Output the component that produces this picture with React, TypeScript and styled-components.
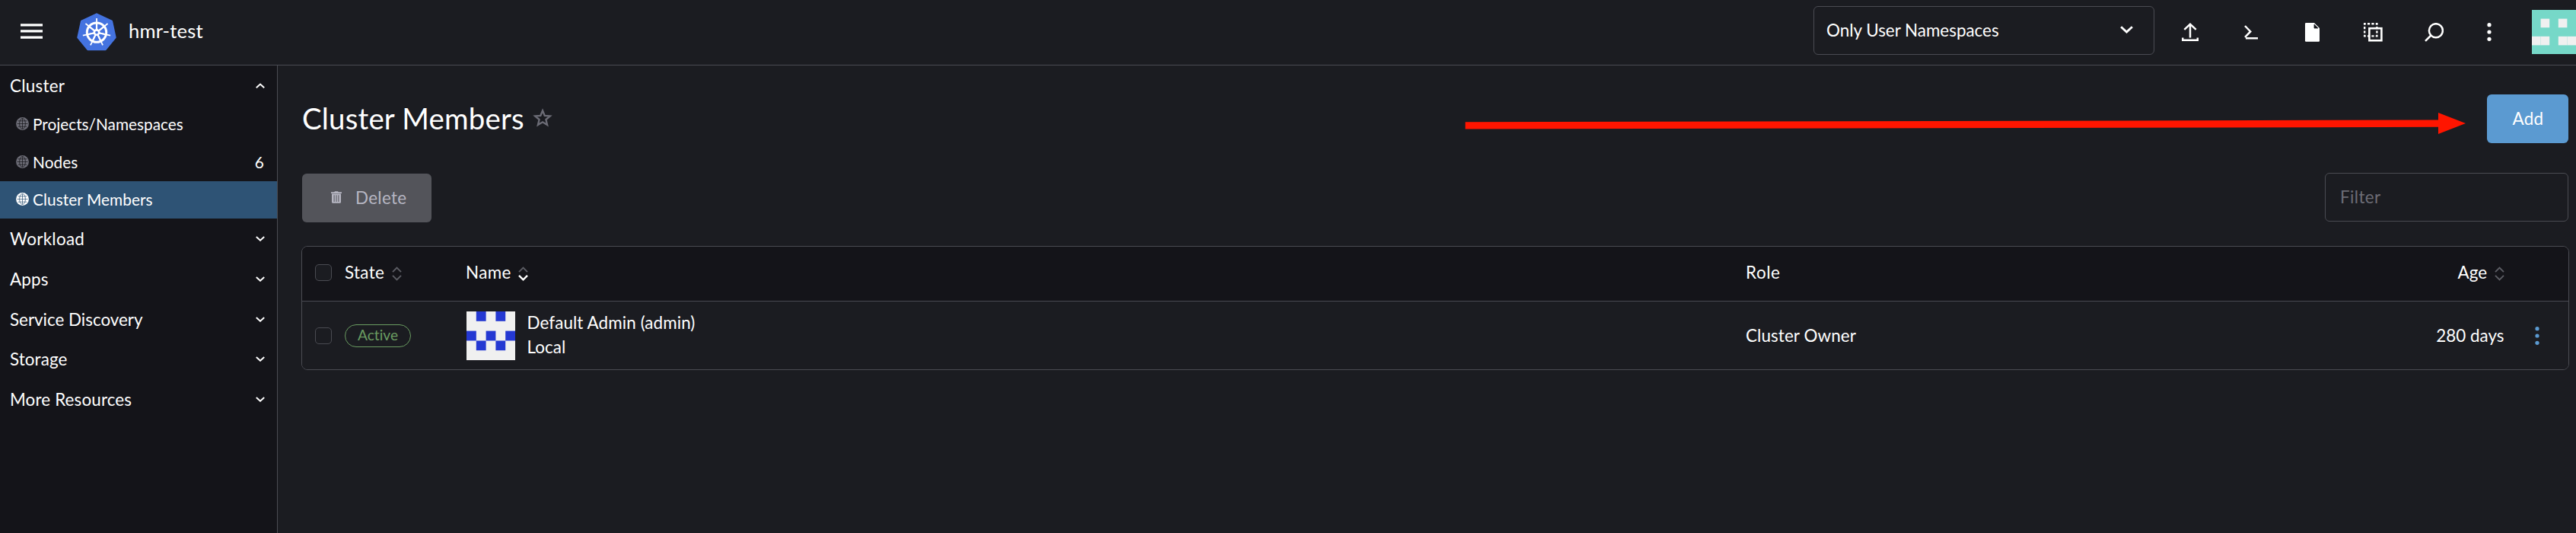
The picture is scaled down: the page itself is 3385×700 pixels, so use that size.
import React from 'react';
import styled, { createGlobalStyle, css } from 'styled-components';

const color = {
  body: '#1b1c21',
  nav: '#141419',
  border: '#4a4b52',
  text: '#ffffff',
  muted: '#6c6c76',
  active: '#2e5375',
  primary: '#5b9ad1',
  disabled: '#53545a',
  disabledText: '#b6b6c2',
  success: '#6a9c61',
};

const GlobalStyle = createGlobalStyle`
  *, *::before, *::after { box-sizing: border-box; }
  body {
    margin: 0;
    background: ${color.body};
    color: ${color.text};
    font-family: Lato, 'Liberation Sans', sans-serif;
    font-size: 22.4px;
    font-variant-ligatures: none;
  }
  svg { display: block; flex: none; }
  button, input { font: inherit; }
`;

const Page = styled.div`
  position: relative;
  display: flex;
  flex-direction: column;
  height: 700px;
  overflow: hidden;
`;

const Header = styled.header`
  display: flex;
  align-items: center;
  height: 86px;
  flex: none;
  padding: 0 0 5px 27px;
  border-bottom: 1px solid ${color.border};
`;

const MenuButton = styled.div`
  margin: 2px 44px 0 0;
`;

const ClusterLogo = styled.div`
  margin: 3px 16px 0 0;
`;

const ClusterName = styled.div`
  flex: 1;
  font-size: 25.6px;
  letter-spacing: 0.15px;
`;

const NamespaceSelect = styled.div`
  display: flex;
  align-items: center;
  justify-content: space-between;
  width: 448px;
  height: 64px;
  margin-right: 7px;
  padding: 0 27px 2px 16px;
  border: 1px solid ${color.border};
  border-radius: 6px;
`;

const HeaderAction = styled.div<{ $width?: number }>`
  display: flex;
  align-items: center;
  justify-content: center;
  width: ${(p) => p.$width ?? 80}px;
  padding-top: 4px;
`;

const UserAvatar = styled.div`
  margin: 4px 0 0 23px;
`;

const Body = styled.div`
  display: flex;
  flex: 1;
  min-height: 0;
`;

const SideNav = styled.nav`
  width: 365px;
  flex: none;
  background: ${color.nav};
  border-right: 1px solid ${color.border};
`;

const GroupHeader = styled.div<{ $spacing?: number }>`
  display: flex;
  align-items: center;
  justify-content: space-between;
  height: 52.75px;
  padding: 0 16px 0 13px;
  letter-spacing: ${(p) => p.$spacing ?? 0}px;
`;

const NavItem = styled.div<{ $active?: boolean; $spacing?: number }>`
  display: flex;
  align-items: center;
  height: 49.5px;
  padding: 0 17px 2px 21px;
  font-size: 20.8px;
  letter-spacing: ${(p) => p.$spacing ?? 0}px;
  background: ${(p) => (p.$active ? color.active : 'transparent')};
`;

const NavLabel = styled.span`
  flex: 1;
  padding-left: 5px;
`;

const Main = styled.main`
  flex: 1;
  min-width: 0;
  padding: 38px 10px 0 32px;
`;

const TitleRow = styled.div`
  display: flex;
  align-items: center;
  height: 64px;
`;

const Title = styled.h1`
  margin: 0 11px 2px 0;
  font-size: 38.4px;
  font-weight: 400;
  line-height: 46px;
  letter-spacing: 0.2px;
`;

const StarIcon = styled.div`
  flex: 1;
  margin-top: -3px;
`;

const button = css`
  display: flex;
  align-items: center;
  height: 64px;
  border: 0;
  border-radius: 6px;
  letter-spacing: 0.3px;
`;

const AddButton = styled.button`
  ${button}
  justify-content: center;
  width: 107px;
  padding: 0 0 1px 1px;
  color: #ffffff;
  background: ${color.primary};
`;

const DeleteButton = styled.button`
  ${button}
  gap: 18px;
  width: 170px;
  padding: 0 0 2px 38px;
  color: ${color.disabledText};
  background: ${color.disabled};
`;

const Toolbar = styled.div`
  display: flex;
  align-items: flex-start;
  justify-content: space-between;
  height: 65px;
  margin: 39px 0 31px;
  padding-top: 1px;
`;

const FilterInput = styled.input`
  width: 320px;
  height: 64px;
  margin-top: -1px;
  padding: 0 19px 1px;
  color: ${color.text};
  letter-spacing: 0.4px;
  background: transparent;
  border: 1px solid ${color.border};
  border-radius: 6px;
  &::placeholder { color: ${color.muted}; opacity: 1; }
`;

const Table = styled.div`
  margin: 0 -1px;
  border: 1px solid ${color.border};
  border-radius: 8px;
  overflow: hidden;
`;

const TableRow = styled.div<{ $head?: boolean }>`
  display: grid;
  grid-template-columns: 56px 159px 1682px 1fr 160px 84.5px;
  align-items: center;
  height: ${(p) => (p.$head ? 72 : 89)}px;
  padding-bottom: ${(p) => (p.$head ? 5 : 0)}px;
  background: ${(p) => (p.$head ? color.nav : color.body)};
  border-bottom: ${(p) => (p.$head ? `1px solid ${color.border}` : '0')};
`;

const Cell = styled.div<{ $end?: boolean; $spacing?: number }>`
  display: flex;
  align-items: center;
  justify-content: ${(p) => (p.$end ? 'flex-end' : 'flex-start')};
  white-space: nowrap;
  letter-spacing: ${(p) => p.$spacing ?? 0}px;
`;

const SortArrows = styled.div`
  margin: 5px 0 0 9.5px;
`;

const Checkbox = styled.div`
  width: 22px;
  height: 22px;
  margin: 1px 0 0 17px;
  background: ${color.body};
  border: 1px solid ${color.border};
  border-radius: 5px;
`;

const StateBadge = styled.div`
  height: 30px;
  width: 87px;
  padding-bottom: 3px;
  display: flex;
  align-items: center;
  justify-content: center;
  font-size: 19.2px;
  color: ${color.success};
  border: 1px solid ${color.success};
  border-radius: 15px;
`;

const Member = styled.div`
  display: flex;
  align-items: center;
  gap: 15.5px;
  padding-left: 1px;
`;

const MemberName = styled.div`
  line-height: 32px;
  letter-spacing: 0.1px;
  padding-bottom: 1px;
`;

const RowActions = styled.div`
  padding-left: 40px;
`;

const PointerArrow = styled.svg`
  position: absolute;
  left: 1925px;
  top: 146px;
  pointer-events: none;
`;

const Hamburger = () => (
  <svg width="30" height="20" viewBox="0 0 30 20" fill="#fff">
    <path d="M0 .2h29v3.3H0zM0 8.3h29v3.3H0zM0 16.4h29v3.3H0z" />
  </svg>
);

const SPOKES = [0, 1, 2, 3, 4, 5, 6].map((i) => (i * 360) / 7);

const KubernetesLogo = () => (
  <svg width="52" height="50" viewBox="0 0 52 50">
    <path
      d="M26 1.6 45.8 11l4.6 21.2L37.5 48h-23L1.6 32.2 6.2 11z"
      fill="#4473e0"
      stroke="#4473e0"
      strokeWidth="2.6"
      strokeLinejoin="round"
    />
    <g stroke="#fff" fill="none">
      <circle cx="26" cy="25.6" r="12.7" strokeWidth="3" />
      {SPOKES.map((angle) => (
        <g key={angle} transform={`rotate(${angle} 26 25.6)`}>
          <path d="M26 22V7" strokeWidth="1.8" />
          <path d="M26 22.5v-9" strokeWidth="2.2" />
        </g>
      ))}
      <circle cx="26" cy="25.6" r="3.2" strokeWidth="2.6" />
    </g>
  </svg>
);

const Chevron = ({ up, size = 12 }: { up?: boolean; size?: number }) => (
  <svg width={size} height={size * 0.6} viewBox="0 0 12 7.2" fill="none" stroke="#fff" strokeWidth="2">
    <path d={up ? 'M.8 6.3 6 1.5l5.2 4.8' : 'M.8.9 6 5.7 11.2.9'} />
  </svg>
);

const UploadIcon = () => (
  <svg width="22" height="25" viewBox="0 0 22 25" fill="none" stroke="#fff" strokeWidth="2.5">
    <path d="M11 19.5V2M3.3 8.8 11 1.7l7.7 7.1M1.2 19.5v3.3h19.6v-3.3" />
  </svg>
);

const ShellIcon = () => (
  <svg width="18" height="19" viewBox="0 0 18 19" fill="none" stroke="#fff" strokeWidth="2.5">
    <path d="M1 1l7.2 7.4L1 15.8M2 17.3h16" />
  </svg>
);

const FileIcon = () => (
  <svg width="19" height="25" viewBox="0 0 19 25">
    <path d="M1.2 0H12l7 7v16.5q0 1.2-1.2 1.2H1.2Q0 24.7 0 23.5V1.2Q0 0 1.2 0z" fill="#fff" />
    <path d="M12 2v5h5z" fill={color.body} stroke={color.body} strokeWidth="0.8" />
  </svg>
);

const CopyIcon = () => (
  <svg width="25" height="25" viewBox="0 0 25 25" fill="none" stroke="#fff">
    <rect x="1.2" y="1.2" width="16.2" height="16.2" strokeWidth="2.4" strokeDasharray="3.2 2.2" strokeDashoffset="1.6" />
    <rect x="7.4" y="7.2" width="16" height="16" strokeWidth="2.6" />
  </svg>
);

const SearchIcon = () => (
  <svg width="25" height="25" viewBox="0 0 25 25" fill="none" stroke="#fff" strokeWidth="2.5">
    <circle cx="14.9" cy="10.2" r="9" />
    <path d="M8.4 16.5 1 23.8" />
  </svg>
);

const Kebab = ({ fill = '#fff' }: { fill?: string }) => (
  <svg width="6" height="24" viewBox="0 0 6 24" fill={fill}>
    <circle cx="3" cy="2.7" r="2.6" />
    <circle cx="3" cy="12" r="2.6" />
    <circle cx="3" cy="21.3" r="2.6" />
  </svg>
);

const GlobeIcon = ({ active }: { active?: boolean }) => (
  <svg width="17" height="17" viewBox="0 0 17 17">
    <circle cx="8.5" cy="8.5" r="8.4" fill={active ? '#fff' : color.muted} />
    <g fill="none" stroke={active ? color.active : color.nav} strokeWidth="0.7">
      <path d="M8.5 1.5v14M1.5 8.5h14M2.8 4.8h11.4M2.8 12.2h11.4" />
      <ellipse cx="8.5" cy="8.5" rx="3.9" ry="7" />
    </g>
  </svg>
);

const FavoriteStar = () => (
  <svg width="26" height="25" viewBox="0 0 26 25" fill="none" stroke={color.muted} strokeWidth="2.3">
    <path d="M13 3.2 15.7 9.8 22.9 10.4 17.4 15 19.1 22 13 18.3 6.9 22 8.6 15 3.1 10.4 10.3 9.8z" />
  </svg>
);

const TrashIcon = () => (
  <svg width="14" height="16" viewBox="0 0 14 16" fill={color.disabledText}>
    <path d="M0 1.3h4.2L5 .2h4l.8 1.1H14V3H0z" />
    <path fillRule="evenodd" d="M1 3.6h12V14.5q0 1.3-1.3 1.3H2.3Q1 15.8 1 14.5zM3.6 5.2v8.7h1V5.2zM6.5 5.2v8.7h1V5.2zM9.4 5.2v8.7h1V5.2z" />
  </svg>
);

const Sort = ({ descending }: { descending?: boolean }) => (
  <SortArrows>
    <svg width="13" height="19" viewBox="0 0 13 19" fill="none" strokeWidth="1.9">
      <path d="M1 7.2 6.5 1.5 12 7.2" stroke="#5c5d64" />
      <path d="M1 11.8 6.5 17.3 12 11.8" stroke={descending ? '#fff' : '#5c5d64'} strokeWidth={descending ? 2.4 : 1.9} />
    </svg>
  </SortArrows>
);

interface IdenticonProps {
  size: number;
  background: string;
  fill: string;
  rows: string[];
}

const Identicon = ({ size, background, fill, rows }: IdenticonProps) => (
  <svg width={size} height={size} viewBox="0 0 5 5">
    <rect width="5" height="5" fill={background} />
    {rows.flatMap((row, y) =>
      [...row].map((cell, x) =>
        cell === '#' ? <rect key={`${x}-${y}`} x={x} y={y} width="1" height="1" fill={fill} /> : null,
      ),
    )}
  </svg>
);

const clusterItems = [
  { label: 'Projects/Namespaces', spacing: 0 },
  { label: 'Nodes', count: 6, spacing: 0.1 },
  { label: 'Cluster Members', active: true, spacing: 0.08 },
];

const groups = [
  { label: 'Workload', spacing: 0.3 },
  { label: 'Apps', spacing: 0.2 },
  { label: 'Service Discovery', spacing: 0 },
  { label: 'Storage', spacing: 0.1 },
  { label: 'More Resources', spacing: 0.15 },
];

export default function App() {
  return (
    <Page>
      <GlobalStyle />
      <Header>
        <MenuButton><Hamburger /></MenuButton>
        <ClusterLogo><KubernetesLogo /></ClusterLogo>
        <ClusterName>hmr-test</ClusterName>
        <NamespaceSelect>
          Only User Namespaces
          <Chevron size={17} />
        </NamespaceSelect>
        <HeaderAction><UploadIcon /></HeaderAction>
        <HeaderAction><ShellIcon /></HeaderAction>
        <HeaderAction><FileIcon /></HeaderAction>
        <HeaderAction><CopyIcon /></HeaderAction>
        <HeaderAction><SearchIcon /></HeaderAction>
        <HeaderAction $width={66}><Kebab /></HeaderAction>
        <UserAvatar>
          <Identicon size={58} background="#76d8c8" fill="#f0f0f0" rows={['', '.#.#.', '', '##.##', '']} />
        </UserAvatar>
      </Header>
      <Body>
        <SideNav>
          <GroupHeader $spacing={0.25}>Cluster<Chevron up /></GroupHeader>
          {clusterItems.map((item) => (
            <NavItem key={item.label} $active={item.active} $spacing={item.spacing}>
              <GlobeIcon active={item.active} />
              <NavLabel>{item.label}</NavLabel>
              {item.count}
            </NavItem>
          ))}
          {groups.map((group) => (
            <GroupHeader key={group.label} $spacing={group.spacing}>
              {group.label}
              <Chevron />
            </GroupHeader>
          ))}
        </SideNav>
        <Main>
          <TitleRow>
            <Title>Cluster Members</Title>
            <StarIcon><FavoriteStar /></StarIcon>
            <AddButton>Add</AddButton>
          </TitleRow>
          <Toolbar>
            <DeleteButton><TrashIcon />Delete</DeleteButton>
            <FilterInput placeholder="Filter" />
          </Toolbar>
          <Table>
            <TableRow $head>
              <Checkbox />
              <Cell $spacing={0.35}>State<Sort /></Cell>
              <Cell $spacing={0.4}>Name<Sort descending /></Cell>
              <Cell $spacing={0.6}>Role</Cell>
              <Cell $end>Age<Sort /></Cell>
            </TableRow>
            <TableRow>
              <Checkbox />
              <Cell><StateBadge>Active</StateBadge></Cell>
              <Member>
                <Identicon size={64} background="#f0f0f0" fill="#2438d2" rows={['.#.#.', '', '#.#.#', '.#.#.', '']} />
                <MemberName>
                  <div>Default Admin (admin)</div>
                  <div>Local</div>
                </MemberName>
              </Member>
              <Cell $spacing={0.1}>Cluster Owner</Cell>
              <Cell $end>280 days</Cell>
              <RowActions><Kebab fill={color.primary} /></RowActions>
            </TableRow>
          </Table>
        </Main>
      </Body>
      <PointerArrow width="1316" height="32" viewBox="0 0 1316 32" fill="#ff1500">
        <path d="M.5 14.3 1279 11.5V2l36 14-36 14v-9.2L.5 23.5z" />
      </PointerArrow>
    </Page>
  );
}
